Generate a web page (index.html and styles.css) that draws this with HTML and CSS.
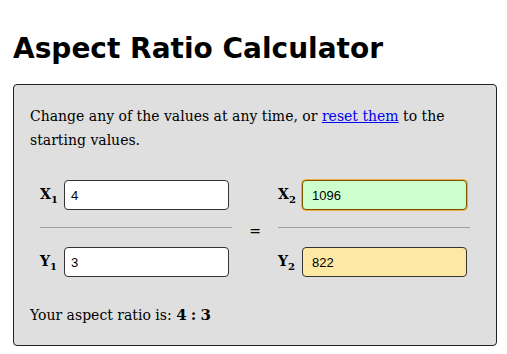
FILE: index.html
```html
<!DOCTYPE html>
<html lang="en">

<head>
 <meta charset="UTF-8">
 <meta name="viewport" content="width=device-width">
 <title>Aspect Ratio Calculator</title>
 <link rel="stylesheet" href="styles.css">
</head>

<body>

 <h1>Aspect Ratio Calculator</h1>

 <form class="calc">

  <p class="intro">Change any of the values at any time, or <a href="#">reset them</a> to the <span>starting values.</span></p>

  <div class="ratios">
   <div class="fraction">
    <label class="row">
     <span class="var">X<sub>1</sub></span>
     <input name="x1" value="4">
    </label>
    <hr>
    <label class="row">
     <span class="var">Y<sub>1</sub></span>
     <input name="y1" value="3">
    </label>
   </div>

   <div class="equals">=</div>

   <div class="fraction">
    <label class="row">
     <span class="var">X<sub>2</sub></span>
     <input name="x2" value="1096" class="result focus">
    </label>
    <hr>
    <label class="row">
     <span class="var">Y<sub>2</sub></span>
     <input name="y2" value="822" class="result changed">
    </label>
   </div>
  </div>

  <p class="answer">Your aspect ratio is: <strong>4 : 3</strong></p>

 </form>

</body>
</html>
```

FILE: styles.css
```css
body {
  margin: 0;
  padding: 0 10px 0 13px;
  font-family: 'DejaVu Serif', Georgia, serif;
  background-color: white;
  color: black;
}
h1 {
  font-family: 'DejaVu Sans', Verdana, sans-serif;
  font-weight: bold;
  font-size: 28px;
  margin: 29px 0 15px 0;
  line-height: 40px;
}
.calc {
  background-color: #dfdfdf;
  border: 1px solid #222;
  border-radius: 4px;
  padding: 19px 16px 18px 16px;
}
.intro {
  font-size: 14px;
  line-height: 24px;
  margin: 0 0 28px 0;
}
a {
  color: #0000ee;
}
.ratios {
  display: flex;
  align-items: center;
  padding: 0 10px;
}
.fraction {
  width: 192px;
}
.equals {
  flex: 1;
  text-align: center;
  font-size: 14px;
  padding-top: 4px;
}
.row {
  display: flex;
  align-items: center;
  gap: 2px;
}
.var {
  width: 22px;
  font-weight: bold;
  font-size: 14px;
}
.var sub {
  font-size: 10px;
}
hr {
  border: none;
  border-top: 1px solid #a0a0a0;
  margin: 17px 0 19px 0;
}
input {
  width: 165px;
  height: 30px;
  box-sizing: border-box;
  border: 1px solid #333;
  border-radius: 4px;
  padding: 2px 6px;
  font-family: 'Liberation Sans', Arial, sans-serif;
  font-size: 13px;
  background-color: white;
  color: #000;
}
.focus {
  background-color: #ccffcc;
  border-color: #7a5200;
  box-shadow: 0 0 0 1px #f0b040;
  padding-left: 9px;
}
.changed {
  background-color: #fde8a4;
  padding-left: 9px;
}
.answer {
  font-size: 14px;
  margin: 26px 0 0 0;
  line-height: 24px;
}
.answer strong {
  font-size: 15px;
  word-spacing: -1px;
}
```
